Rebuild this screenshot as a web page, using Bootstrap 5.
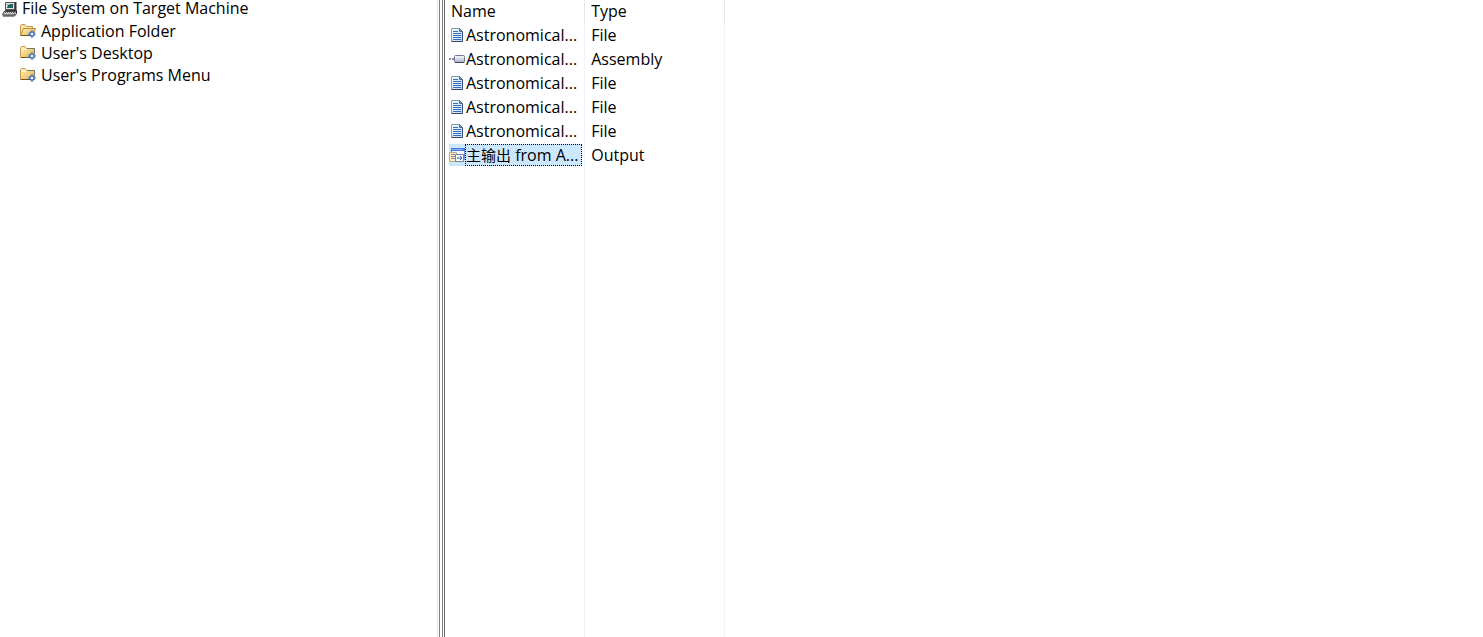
<!DOCTYPE html>
<html lang="en">
<head>
<meta charset="utf-8">
<meta name="viewport" content="width=device-width, initial-scale=1">
<title>File System on Target Machine</title>
<link href="https://cdn.jsdelivr.net/npm/bootstrap@5.3.0/dist/css/bootstrap.min.css" rel="stylesheet">
<style>
  body { font: 16px/22px "Open Sans", "Noto Sans CJK SC", sans-serif; color: #000; background: #fff; }
  svg { width: 16px; height: 16px; flex: none; display: block; }
  .icon-defs { width: 0; height: 0; }
  .tree-pane { width: 437px; padding-left: 2px; }
  .tree a { color: inherit; text-decoration: none; }
  .tree-root { gap: 4px; line-height: 17px; margin-bottom: 3px; }
  .tree-item { gap: 5px; padding-left: 18px; }
  .splitter { width: 8px; cursor: col-resize; border: solid #6d6d70; border-width: 0 1px; border-left-color: #e3e3e8;
    background: linear-gradient(90deg, #fff 1px, #808084 1px 2px, #fff 2px 4px, #808084 4px 5px, #fff 5px); }
  .files { table-layout: fixed; width: 280px; height: 100vh; }
  .files th { font-weight: 400; height: 23px; line-height: 22px; vertical-align: top; padding: 0 6px; border-right: 1px solid #e6e6e6; }
  .files td { height: 24px; padding: 0 6px; border-right: 1px solid #edf3fd; }
  .files td:first-child { padding: 0 2px 0 4px; }
  .files .filler td { height: auto; }
  .file-label { padding: 0 1px; height: 22px; line-height: 20px; border: 1px solid transparent; }
  .selected-file { background: #cce8ff; }
  .file-label { padding: 0; }
  .selected-file .file-label { border: 1px dotted #000; }
  .han { font-size: 15px; }
</style>
</head>
<body>
<svg class="icon-defs position-absolute" aria-hidden="true">
  <defs>
    <linearGradient id="gold" x2="1" y2="1"><stop stop-color="#fff3bd"/><stop offset="1" stop-color="#e6b04a"/></linearGradient>
    <linearGradient id="steel" x2="0" y2="1"><stop stop-color="#fff"/><stop offset="1" stop-color="#a4aec6"/></linearGradient>
    <linearGradient id="paper" x2="1" y2="1"><stop stop-color="#fff"/><stop offset="1" stop-color="#c4d6f0"/></linearGradient>
    <symbol id="gem" viewBox="0 0 16 16">
      <path d="M12 7 16 11 12 15 8 11z" fill="#2c5fae"/>
      <path d="M12 8.2v5.6M9.2 11h5.6" stroke="#b5d3f8" stroke-width="1"/>
      <path d="M12 10v2M11 11h2" stroke="#fff"/>
    </symbol>
    <symbol id="computer" viewBox="0 0 16 16">
      <path d="M4 1h10.5v8.5L13 11H3z" fill="#333"/>
      <path d="M3.5 1.5h9v7h-9z" fill="#e4e4e4" stroke="#555"/>
      <path d="M5 3h6v4H5z" fill="#235f66"/><path d="M5 3.5h3M5.5 3v3" stroke="#6cc0c4"/>
      <path d="M2 10.5h11.5L12 14H.5z" fill="#ddd" stroke="#444"/>
      <path d="M14.5 9.5v3L12.5 15H1" fill="none" stroke="#222"/>
      <path d="M3 11.5h9M2 13h9" stroke="#666" stroke-dasharray="1 1"/>
    </symbol>
    <symbol id="folder" viewBox="0 0 16 16">
      <path d="M.5 12.5v-10l1-1H5l1.5 2h8v9z" fill="url(#gold)" stroke="#c59a4e"/>
      <path d="M1.5 4.5H6l1-1" fill="none" stroke="#fffbe2"/><path d="M7 3.5h7.5V8" fill="none" stroke="#77746c"/>
      <path d="M1 12.5h9" stroke="#6e5428"/>
      <use href="#gem"/>
    </symbol>
    <symbol id="folder-open" viewBox="0 0 16 16">
      <path d="M.5 12.5v-10l1-1H5l1.5 2h6v3" fill="#fae5a1" stroke="#c59a4e"/>
      <path d="M.5 12.5 3.5 5.5h12l-2.5 7z" fill="url(#gold)" stroke="#c08a38"/>
      <path d="M1 12.5h9" stroke="#6e5428"/>
      <use href="#gem"/>
    </symbol>
    <symbol id="document" viewBox="0 0 16 16">
      <path d="M2.5 1.5h8l3 3v10h-11z" fill="url(#paper)" stroke="#8799b8"/>
      <path d="M13.5 4.5v10h-11" fill="none" stroke="#364a70"/>
      <path d="M10.5 1.5v3h3z" fill="#a8bbd8" stroke="#50658b"/>
      <path d="M4 4.5h5M4 6.5h8M4 8.5h8M4 10.5h8M4 12.5h8" stroke="#2e70c4"/>
    </symbol>
    <symbol id="assembly" viewBox="0 0 16 16">
      <path d="M0 8h2M3 8h3" stroke="#858b99" stroke-width="2"/>
      <rect x="5.5" y="4.5" width="10" height="7" rx="1" fill="url(#steel)" stroke="#707a94"/>
      <path d="M6 11.5h9" stroke="#3e4864"/>
    </symbol>
    <symbol id="output" viewBox="0 0 16 16">
      <path d="M2.5 1.5h13v11h-13z" fill="#f5f9ff" stroke="#6d91d4"/>
      <path d="M2 1h14v3H2z" fill="#4278dd"/><path d="M3 2.5h11" stroke="#8db4f4"/>
      <path d="M.5 5.5h7v9h-7z" fill="#fff2c0" stroke="#b6aa88"/>
      <path d="M2 7.5h4M2 9.5h4M2 11.5h4" stroke="#7d88ad"/>
      <path d="M6.5 7.5h8v7h-8z" fill="#fff" stroke="#7182a5"/>
      <path d="M8 11h5M11 9l2 2-2 2" fill="none" stroke="#2863bb"/>
    </symbol>
  </defs>
</svg>
<main class="d-flex vh-100 overflow-hidden">
  <nav class="tree-pane flex-shrink-0" aria-label="Target machine folders">
    <ul class="list-unstyled tree mb-0">
      <li><a href="#" class="tree-root d-flex align-items-center"><svg><use href="#computer"/></svg>File System on Target Machine</a>
        <ul class="list-unstyled">
          <li><a href="#" class="tree-item d-flex align-items-center"><svg><use href="#folder-open"/></svg>Application Folder</a></li>
          <li><a href="#" class="tree-item d-flex align-items-center"><svg><use href="#folder"/></svg>User's Desktop</a></li>
          <li><a href="#" class="tree-item d-flex align-items-center"><svg><use href="#folder"/></svg>User's Programs Menu</a></li>
        </ul>
      </li>
    </ul>
  </nav>
  <div class="splitter flex-shrink-0" role="separator" aria-orientation="vertical"></div>
  <section class="flex-grow-1">
    <table class="files">
      <thead><tr><th scope="col">Name</th><th scope="col">Type</th></tr></thead>
      <tbody>
        <tr><td><div class="d-flex align-items-center"><svg><use href="#document"/></svg><span class="file-label flex-grow-1 text-nowrap">Astronomical...</span></div></td><td>File</td></tr>
        <tr><td><div class="d-flex align-items-center"><svg><use href="#assembly"/></svg><span class="file-label flex-grow-1 text-nowrap">Astronomical...</span></div></td><td>Assembly</td></tr>
        <tr><td><div class="d-flex align-items-center"><svg><use href="#document"/></svg><span class="file-label flex-grow-1 text-nowrap">Astronomical...</span></div></td><td>File</td></tr>
        <tr><td><div class="d-flex align-items-center"><svg><use href="#document"/></svg><span class="file-label flex-grow-1 text-nowrap">Astronomical...</span></div></td><td>File</td></tr>
        <tr><td><div class="d-flex align-items-center"><svg><use href="#document"/></svg><span class="file-label flex-grow-1 text-nowrap">Astronomical...</span></div></td><td>File</td></tr>
        <tr aria-selected="true"><td><div class="selected-file d-flex align-items-center"><svg><use href="#output"/></svg><span class="file-label flex-grow-1 text-nowrap"><span class="han" lang="zh-CN">主输出</span> from A...</span></div></td><td>Output</td></tr>
        <tr class="filler" aria-hidden="true"><td></td><td></td></tr>
      </tbody>
    </table>
  </section>
</main>
<script src="https://cdn.jsdelivr.net/npm/bootstrap@5.3.0/dist/js/bootstrap.bundle.min.js"></script>
</body>
</html>
